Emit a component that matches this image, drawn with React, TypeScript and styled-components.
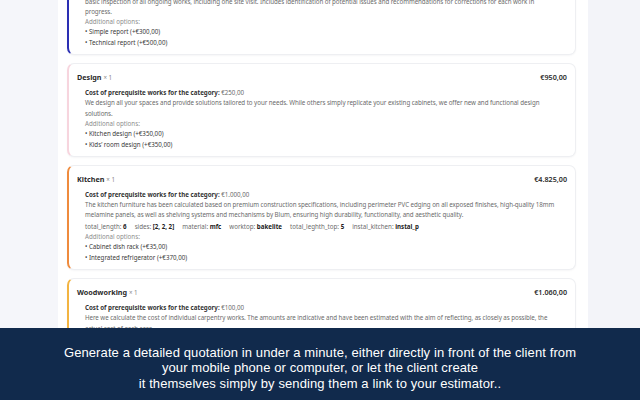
import React from 'react'
import styled, { createGlobalStyle } from 'styled-components'

interface Attr {
   label: string
   value: string
}

interface Category {
   title: string
   qty: number
   price: string
   accent: string
   prerequisite: string
   description: string[]
   attrs?: Attr[]
   options?: string[]
}

const categories: Category[] = [
   {
      title: 'Supervision',
      qty: 1,
      price: '€800,00',
      accent: '#2b2fb3',
      prerequisite: '€0,00',
      description: [
         'Professional supervision of the renovation carried out by a certified engineer, with regular site visits and a written report after a',
         'basic inspection of all ongoing works, including one site visit. Includes identification of potential issues and recommendations for corrections for each work in',
         'progress.',
      ],
      options: ['Simple report (+€300,00)', 'Technical report (+€500,00)'],
   },
   {
      title: 'Design',
      qty: 1,
      price: '€950,00',
      accent: '#f7d5de',
      prerequisite: '€250,00',
      description: [
         'We design all your spaces and provide solutions tailored to your needs. While others simply replicate your existing cabinets, we offer new and functional design',
         'solutions.',
      ],
      options: ['Kitchen design (+€350,00)', 'Kids\u2019 room design (+€350,00)'],
   },
   {
      title: 'Kitchen',
      qty: 1,
      price: '€4.825,00',
      accent: '#ef8b3d',
      prerequisite: '€1.000,00',
      description: [
         'The kitchen furniture has been calculated based on premium construction specifications, including perimeter PVC edging on all exposed finishes, high-quality 18mm',
         'melamine panels, as well as shelving systems and mechanisms by Blum, ensuring high durability, functionality, and aesthetic quality.',
      ],
      attrs: [
         { label: 'total_length:', value: '6' },
         { label: 'sides:', value: '[2, 2, 2]' },
         { label: 'material:', value: 'mfc' },
         { label: 'worktop:', value: 'bakelite' },
         { label: 'total_leghth_top:', value: '5' },
         { label: 'instal_kitchen:', value: 'instal_p' },
      ],
      options: ['Cabinet dish rack (+€35,00)', 'Integrated refrigerator (+€370,00)'],
   },
   {
      title: 'Woodworking',
      qty: 1,
      price: '€1.060,00',
      accent: '#f3b441',
      prerequisite: '€100,00',
      description: [
         'Here we calculate the cost of individual carpentry works. The amounts are indicative and have been estimated with the aim of reflecting, as closely as possible, the',
         'actual cost of each case.',
      ],
      options: ['Cutting and edging (+€60,00)'],
   },
]

const App: React.FC = () => {
   return (
      <>
         <GlobalStyle />
         <Page>
            <Viewport>
               <Panel>
                  <CardList>
                     {categories.map((c) => (
                        <Card key={c.title} accent={c.accent}>
                           <CardHead>
                              <CardTitle>
                                 {c.title} <Qty>× {c.qty}</Qty>
                              </CardTitle>
                              <Price>{c.price}</Price>
                           </CardHead>
                           <CardBody>
                              <div>
                                 <strong>Cost of prerequisite works for the category:</strong> {c.prerequisite}
                              </div>
                              {c.description.map((line) => (
                                 <DescLine key={line}>{line}</DescLine>
                              ))}
                              {c.attrs && (
                                 <AttrRow>
                                    {c.attrs.map((a) => (
                                       <span key={a.label}>
                                          {a.label} <b>{a.value}</b>
                                       </span>
                                    ))}
                                 </AttrRow>
                              )}
                              {c.options && (
                                 <>
                                    <OptionsLabel>Additional options:</OptionsLabel>
                                    {c.options.map((o) => (
                                       <OptionItem key={o}>• {o}</OptionItem>
                                    ))}
                                 </>
                              )}
                           </CardBody>
                        </Card>
                     ))}
                  </CardList>
               </Panel>
               <SideStrip />
            </Viewport>
            <Banner>
               Generate a detailed quotation in under a minute, either directly in front of the client from
               <br />
               your mobile phone or computer, or let the client create
               <br />
               it themselves simply by sending them a link to your estimator..
            </Banner>
         </Page>
      </>
   )
}

export default App

const GlobalStyle = createGlobalStyle`
  html, body {
    margin: 0;
    padding: 0;
    background: #f5f6fa;
  }
`

const Page = styled.div`
  width: 640px;
  height: 400px;
  display: flex;
  flex-direction: column;
  overflow: hidden;
  font-family: 'Noto Sans', 'Open Sans', sans-serif;
`

const Viewport = styled.div`
  flex: 1;
  display: flex;
  overflow: hidden;
  background: #f5f6fa;
`

const Panel = styled.div`
  margin-left: 58px;
  width: 530px;
  background: #ffffff;
  padding: 0 12px 0 9px;
  box-sizing: border-box;
  overflow: hidden;
`

const SideStrip = styled.div`
  flex: 1;
  background: #f3f4f9;
`

const CardList = styled.div`
  display: flex;
  flex-direction: column;
  gap: 8px;
  margin-top: -49px;
`

const Card = styled.div<{ accent: string }>`
  border: 1px solid #eeeff2;
  border-left: 2px solid ${(p) => p.accent};
  border-radius: 7px;
  padding: 7px 8px 6px 8px;
  background: #fff;
  box-shadow: 0 1px 2px rgba(20, 30, 60, 0.04);
`

const CardHead = styled.div`
  display: flex;
  justify-content: space-between;
  align-items: center;
  height: 12px;
  margin-bottom: 5px;
`

const CardTitle = styled.div`
  font-size: 7.2px;
  font-weight: 700;
  color: #2a2a2a;
`

const Qty = styled.span`
  font-weight: 400;
  font-size: 6.2px;
  color: #8a8a8a;
`

const Price = styled.div`
  font-size: 7.2px;
  font-weight: 600;
  color: #2a2a2a;
`

const CardBody = styled.div`
  padding-left: 8px;
  font-size: 6.2px;
  line-height: 10.3px;
  color: #6b6b6b;

  strong {
    color: #333;
    font-weight: 700;
  }
`

const DescLine = styled.div`
  white-space: nowrap;
  letter-spacing: -0.05px;
`

const AttrRow = styled.div`
  display: flex;
  gap: 8px;
  margin-top: 1px;

  b {
    color: #222;
    font-weight: 700;
  }
`

const OptionsLabel = styled.div`
  color: #8d8d8d;
`

const OptionItem = styled.div`
  color: #3a3a3a;
`

const Banner = styled.div`
  height: 72px;
  flex-shrink: 0;
  background: #112a4c;
  color: #ffffff;
  display: flex;
  flex-direction: column;
  justify-content: center;
  text-align: center;
  font-family: 'Liberation Sans', Arial, sans-serif;
  font-size: 13px;
  letter-spacing: 0.1px;
  line-height: 15.5px;
  padding-top: 8px;
  box-sizing: border-box;
`
